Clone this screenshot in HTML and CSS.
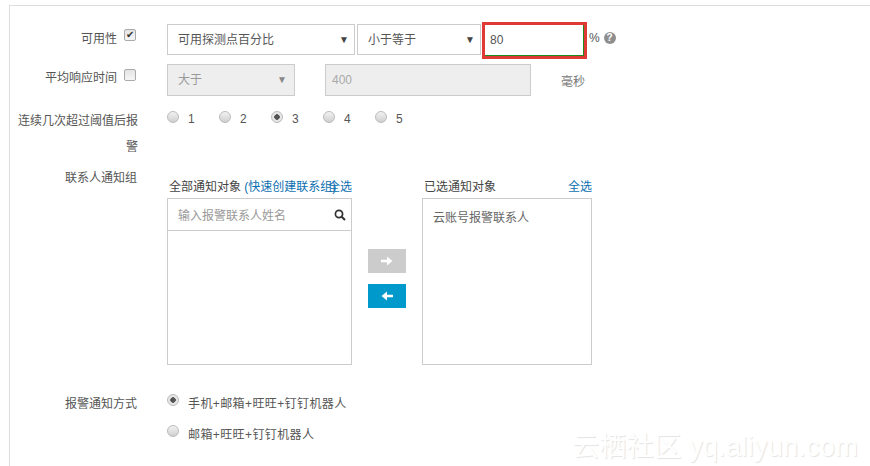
FILE: index.html
```html
<!DOCTYPE html>
<html lang="en">
<head>
  <meta charset="UTF-8" />
  <title>报警规则</title>
  <link rel="stylesheet" href="styles.css">
</head>
<body>
  <div class="panel">

    <div class="row row-first">
      <div class="label">可用性</div>
      <input class="check" type="checkbox" checked>
      <div class="select select-wide">可用探测点百分比<span class="caret">▼</span></div>
      <div class="select select-mid">小于等于<span class="caret">▼</span></div>
      <div class="mark"><div class="value">80</div></div>
      <span class="unit">%</span>
      <span class="help">?</span>
    </div>

    <div class="row row-second">
      <div class="label">平均响应时间</div>
      <input class="check" type="checkbox">
      <div class="select select-off">大于<span class="caret">▼</span></div>
      <div class="value-off">400</div>
      <span class="ms">毫秒</span>
    </div>

    <div class="row row-third">
      <div class="label label-wrap">连续几次超过阈值后报警</div>
      <div class="radios">
        <div class="radio-item"><span class="radio"></span>1</div>
        <div class="radio-item"><span class="radio"></span>2</div>
        <div class="radio-item"><span class="radio on"></span>3</div>
        <div class="radio-item"><span class="radio"></span>4</div>
        <div class="radio-item"><span class="radio"></span>5</div>
      </div>
    </div>

    <div class="row row-contacts">
      <div class="label label-long">联系人通知组</div>
      <div class="picker">
        <div class="col col-left">
          <div class="col-head">
            <span class="col-title">全部通知对象 <a class="link">(快速创建联系组)</a></span>
            <a class="link link-all">全选</a>
          </div>
          <div class="box">
            <div class="search">
              <span>输入报警联系人姓名</span>
              <svg class="search-icon" width="12" height="12" viewBox="0 0 12 12">
                <circle cx="5" cy="5" r="3.6" fill="none" stroke="#333" stroke-width="1.7"/>
                <path d="M7.7 7.7L11 11" stroke="#333" stroke-width="2"/>
              </svg>
            </div>
          </div>
        </div>
        <div class="arrows">
          <div class="arrow arrow-off">
            <svg width="14" height="12" viewBox="0 0 14 12"><path d="M1 4.7h6V1.5L12.5 6 7 10.500V7.300H1z" fill="#fff"/></svg>
          </div>
          <div class="arrow arrow-on">
            <svg width="14" height="12" viewBox="0 0 14 12"><path d="M13 4.700H7V1.500L1.500 6 7 10.500V7.300h6z" fill="#fff"/></svg>
          </div>
        </div>
        <div class="col col-right">
          <div class="col-head">
            <span class="col-title">已选通知对象</span>
            <a class="link">全选</a>
          </div>
          <div class="box box-picked">云账号报警联系人</div>
        </div>
      </div>
    </div>

    <div class="row row-notify">
      <div class="label label-long">报警通知方式</div>
      <div class="notify-list">
        <div class="notify-item"><span class="radio on"></span>手机+邮箱+旺旺+钉钉机器人</div>
        <div class="notify-item"><span class="radio"></span>邮箱+旺旺+钉钉机器人</div>
      </div>
    </div>

  </div>

  <div class="watermark">云栖社区 yq.aliyun.com</div>
</body>
</html>
```

FILE: styles.css
```css
html, body {
  height: 100%;
  overflow: hidden;
}

body {
  margin: 0;
  padding: 5px 0 0 9px;
  box-sizing: border-box;
  background: #fff;
  color: #555;
  font-family: "Liberation Sans", "Noto Sans CJK SC", sans-serif;
  font-size: 12px;
}

.panel {
  height: 100%;
  border-top: 1px solid #ddd;
  border-left: 1px solid #ddd;
  box-sizing: border-box;
}

.row {
  display: flex;
  align-items: flex-start;
}

.label {
  width: 107px;
  margin-right: 7px;
  text-align: right;
  line-height: 18px;
  color: #555;
  flex: none;
}

.label-long {
  width: 127px;
  margin-right: 0;
}

.row-first {
  height: 37px;
  padding-top: 16px;
}

.row-first .label {
  padding-top: 8px;
}

.check {
  appearance: none;
  position: relative;
  box-sizing: border-box;
  width: 12px;
  height: 12px;
  margin: 7px 0 0 0;
  border: 1px solid #aaa;
  border-radius: 2px;
  background: linear-gradient(#e4e4e4, #f6f6f6);
  flex: none;
}

.check:checked::after {
  content: "✔";
  position: absolute;
  top: 0;
  left: 0;
  width: 10px;
  color: #333;
  font-size: 10px;
  line-height: 10px;
  text-align: center;
}

.select {
  position: relative;
  box-sizing: border-box;
  height: 31px;
  margin-top: 2px;
  padding-left: 10px;
  border: 1px solid #ccc;
  line-height: 31px;
  color: #555;
  flex: none;
}

.caret {
  position: absolute;
  top: 0;
  right: 5px;
  font-size: 10px;
  line-height: 29px;
  color: #444;
}

.select-wide {
  width: 188px;
  margin-left: 31px;
}

.select-mid {
  width: 124px;
  margin-left: 2px;
}

.mark {
  box-sizing: border-box;
  width: 105px;
  height: 37px;
  margin-left: 1px;
  border: 3px solid #e03a37;
  flex: none;
}

.value {
  box-sizing: border-box;
  width: 99px;
  height: 31px;
  padding-left: 5px;
  border-right: 1px solid #1d8a1d;
  border-bottom: 1px solid #1d8a1d;
  line-height: 31px;
}

.unit {
  margin: 9px 0 0 2px;
}

.help {
  width: 12px;
  height: 12px;
  margin: 10px 0 0 4px;
  border-radius: 50%;
  background: #8f8f8f;
  color: #fff;
  font-size: 10px;
  font-weight: bold;
  line-height: 12px;
  text-align: center;
}

.row-second {
  margin-top: 2px;
  height: 37px;
}

.row-second .label {
  padding-top: 8px;
}

.row-second .check {
  margin-top: 8px;
}

.select-off {
  width: 128px;
  height: 32px;
  margin: 3px 0 0 31px;
  background: #eee;
  color: #999;
  line-height: 30px;
}

.select-off .caret {
  right: 7px;
  color: #888;
}

.value-off {
  box-sizing: border-box;
  width: 206px;
  height: 32px;
  margin: 3px 0 0 30px;
  padding-left: 6px;
  border: 1px solid #ccc;
  background: #eee;
  color: #aaa;
  line-height: 30px;
  flex: none;
}

.ms {
  margin: 11px 0 0 30px;
  color: #777;
}

.row-third {
  height: 55px;
  padding-top: 9px;
}

.label-wrap {
  width: 121px;
  margin-left: 7px;
  margin-right: 0;
  line-height: 26px;
  padding-top: 1px;
}

.radios {
  display: flex;
  margin-left: 29px;
  padding-top: 4px;
}

.radio-item {
  width: 52px;
  display: flex;
  align-items: flex-start;
  line-height: 16px;
}

.radio {
  width: 12px;
  height: 12px;
  margin-right: 9px;
  border: 1px solid #bbb;
  border-radius: 50%;
  background: linear-gradient(#f2f2f2, #cfcfcf);
  box-sizing: border-box;
  flex: none;
}

.radio.on {
  background: radial-gradient(circle, #555 0, #555 2.5px, #e6e6e6 3px);
}

.row-contacts {
  height: 226px;
}

.row-contacts .label {
  margin-top: 7px;
}

.picker {
  display: flex;
  margin-left: 30px;
  padding-top: 16px;
}

.col-left,
.col-right {
  flex: none;
}

.col-left {
  width: 185px;
}

.col-right {
  width: 170px;
}

.col-head {
  display: flex;
  justify-content: space-between;
  height: 18px;
  padding-left: 2px;
  line-height: 18px;
  white-space: nowrap;
  position: relative;
}

.col-title {
  color: #444;
}

.link {
  color: #0d6fb0;
}

.col-left .link-all {
  position: absolute;
  top: 0;
  right: 0;
}

.box {
  box-sizing: border-box;
  height: 167px;
  margin-top: 2px;
  border: 1px solid #ccc;
}

.search {
  display: flex;
  align-items: center;
  justify-content: space-between;
  height: 31px;
  padding: 0 5px 0 10px;
  border-bottom: 1px solid #ccc;
  color: #999;
}

.box-picked {
  padding: 10px 0 0 10px;
  line-height: 18px;
  color: #666;
}

.arrows {
  width: 38px;
  margin: 71px 16px 0 16px;
  flex: none;
}

.arrow {
  display: flex;
  align-items: center;
  justify-content: center;
  height: 24px;
  margin-bottom: 11px;
}

.arrow-off {
  background: #ccc;
}

.arrow-on {
  background: #0099cc;
}

.row-notify {
  padding-top: 4px;
}

.row-notify .label {
  margin-top: 3px;
}

.notify-list {
  margin-left: 30px;
}

.notify-item {
  display: flex;
  height: 31px;
  line-height: 18px;
  padding-top: 3px;
  box-sizing: border-box;
  color: #555;
  letter-spacing: 0.4px;
}

.notify-item .radio {
  margin-top: -1px;
}

.watermark {
  position: absolute;
  left: 572px;
  top: 425px;
  color: #fff;
  font-size: 27px;
  letter-spacing: 0.3px;
  white-space: nowrap;
  text-shadow: 1px 1px 1px #e4e4e4;
}
```
